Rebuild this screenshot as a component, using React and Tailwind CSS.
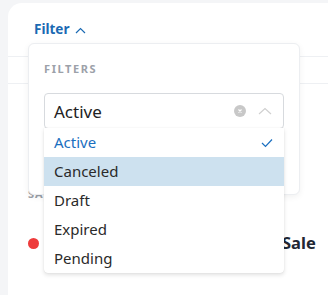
import React from "react";

const font = { fontFamily: '"Noto Sans", "Open Sans", sans-serif' };

export default function App() {
  return (
    <div
      className="w-[328px] h-[295px] overflow-hidden bg-[#f4f5f7] pl-2 pt-[3px] relative"
      style={font}
    >
      <div className="bg-white rounded-tl-[14px] w-[340px] h-[300px] flex flex-col">
        <div className="h-[54px] border-b border-[#eef0f3] flex items-center pl-[26px] pt-[1px]">
          <div className="flex items-center gap-[6px] text-[#1b6ab3] text-[13.5px] font-bold leading-none">
            <span>Filter</span>
            <svg width="11" height="7" viewBox="0 0 11 7" fill="none">
              <path d="M1 6L5.5 1.5L10 6" stroke="#1b6ab3" strokeWidth="1.2" />
            </svg>
          </div>
        </div>
        <div className="h-[27px] border-b border-[#eef0f3]" />
        <div className="pl-[20px] pt-[104px] text-[11px] font-bold tracking-[1px] text-[#9aa0a8] leading-none">
          SALES
        </div>
        <div className="pl-[20px] pt-[36px] flex items-center gap-[8px]">
          <span className="w-[11px] h-[11px] rounded-full bg-[#ee3b3b]" />
          <span className="text-[16.5px] font-bold text-[#1f2733] leading-none flex">
            <span className="inline-block w-[235px] whitespace-nowrap">Spring</span>
            <span>Sale</span>
          </span>
        </div>
      </div>

      {/* Filters popover */}
      <div className="absolute left-[28px] top-[43px] w-[272px] h-[152px] bg-white border border-[#eceef1] rounded-[6px] shadow-[0_2px_6px_rgba(0,0,0,0.06)] px-[15px] pt-[19px]">
        <div className="text-[11px] font-bold tracking-[1.6px] text-[#9ca1a9] leading-none">
          FILTERS
        </div>
        <div className="mt-[19px] h-[36px] w-[240px] border border-[#d7dade] rounded-[4px] flex items-center pl-[9px] pr-[11px]">
          <span className="flex-1 text-[17px] text-[#222] leading-none">Active</span>
          <span className="w-[12px] h-[12px] rounded-full bg-[#c8c8c8] flex items-center justify-center mr-[12px]">
            <svg width="6" height="6" viewBox="0 0 6 6">
              <path d="M1.5 1.5L4.5 4.5M4.5 1.5L1.5 4.5" stroke="#fff" strokeWidth="1.1" />
            </svg>
          </span>
          <svg width="14" height="8" viewBox="0 0 14 8" fill="none">
            <path d="M1 7L7 1.5L13 7" stroke="#d0d0d0" strokeWidth="1.2" />
          </svg>
        </div>
      </div>

      {/* Dropdown menu */}
      <div className="absolute left-[44px] top-[128px] w-[240px] bg-white rounded-b-[4px] shadow-[0_2px_4px_rgba(0,0,0,0.12),0_0_1px_rgba(0,0,0,0.15)] flex flex-col text-[15px] leading-none">
        <div className="h-[29px] flex items-center pl-[10px] pr-[11px] text-[#1a6fc0]">
          <span className="flex-1">Active</span>
          <svg width="12" height="10" viewBox="0 0 12 10" fill="none">
            <path d="M1 5L4.5 8.5L11 1.5" stroke="#1a6fc0" strokeWidth="1.2" />
          </svg>
        </div>
        <div className="h-[29px] flex items-center pl-[10px] bg-[#cde1ef] text-[#2a2a2a]">Canceled</div>
        <div className="h-[29px] flex items-center pl-[10px] text-[#2a2a2a]">Draft</div>
        <div className="h-[29px] flex items-center pl-[10px] text-[#2a2a2a]">Expired</div>
        <div className="h-[29px] flex items-center pl-[10px] text-[#2a2a2a]">Pending</div>
      </div>
    </div>
  );
}
